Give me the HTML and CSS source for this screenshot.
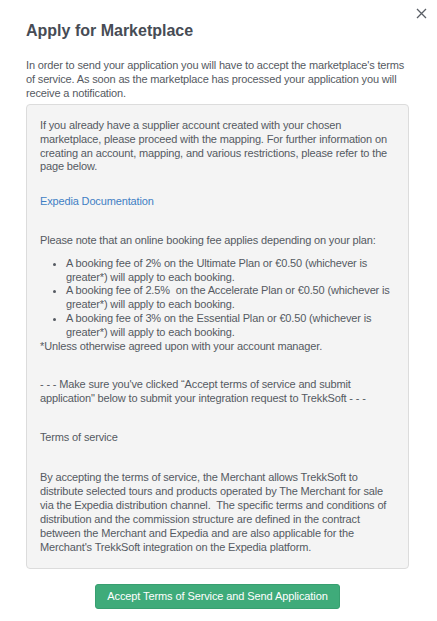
FILE: index.html
```html
<!DOCTYPE html>
<html>
<head>
<meta charset="utf-8">
<link rel="stylesheet" href="styles.css">
</head>
<body>
<div class="modal">
  <button class="close" aria-label="Close">
    <svg width="11" height="11" viewBox="0 0 11 11"><path d="M1 1L10 10M10 1L1 10" stroke="#5a5f66" stroke-width="1.3" fill="none"/></svg>
  </button>
  <h1 class="title">Apply for Marketplace</h1>
  <p class="intro">In order to send your application you will have to accept the marketplace's terms of service. As soon as the marketplace has processed your application you will receive a notification.</p>
  <div class="terms">
    <p class="p-first">If you already have a supplier account created with your chosen marketplace, please proceed with the mapping. For further information on creating an account, mapping, and various restrictions, please refer to the page below.</p>
    <p class="p-link"><a class="link" href="#">Expedia Documentation</a></p>
    <p class="p-gap">Please note that an online booking fee applies depending on your plan:</p>
    <ul class="fees">
      <li>A booking fee of 2% on the Ultimate Plan or €0.50 (whichever is greater*) will apply to each booking.</li>
      <li>A booking fee of 2.5%&nbsp; on the Accelerate Plan or €0.50 (whichever is greater*) will apply to each booking.</li>
      <li>A booking fee of 3% on the Essential Plan or €0.50 (whichever is greater*) will apply to each booking.</li>
    </ul>
    <p class="p-note">*Unless otherwise agreed upon with your account manager.</p>
    <p class="p-gap">- - - Make sure you've clicked “Accept terms of service and submit application" below to submit your integration request to TrekkSoft - - -</p>
    <p class="p-gap">Terms of service</p>
    <p class="p-gap p-last">By accepting the terms of service, the Merchant allows TrekkSoft to distribute selected tours and products operated by The Merchant for sale via the Expedia distribution channel.&nbsp; The specific terms and conditions of distribution and the commission structure are defined in the contract between the Merchant and Expedia and are also applicable for the Merchant's TrekkSoft integration on the Expedia platform.</p>
  </div>
  <div class="actions">
    <button class="accept">Accept Terms of Service and Send Application</button>
  </div>
</div>
</body>
</html>
```
FILE: styles.css
```css
html, body {
  margin: 0;
  padding: 0;
  background: #ffffff;
}
body {
  font-family: "Liberation Sans", Arial, sans-serif;
  font-size: 11px;
  letter-spacing: -0.15px;
  color: #555a62;
}
.modal {
  position: relative;
  padding: 21px 28px 0 26px;
}
.close {
  position: absolute;
  top: 8px;
  right: 10px;
  border: 0;
  background: none;
  padding: 0;
  width: 11px;
  height: 11px;
  cursor: pointer;
}
.close svg { display: block; }
.title {
  margin: 0;
  font-size: 16px;
  font-weight: bold;
  letter-spacing: 0;
  color: #474c55;
  line-height: 20px;
}
.intro {
  margin: 17px 0 0 0;
  line-height: 14px;
}
.terms {
  margin-top: 4px;
  background: #f4f4f4;
  border: 1px solid #dcdcdc;
  border-radius: 4px;
  padding: 14px 13px 14px 13px;
  line-height: 13.8px;
}
.terms p { margin: 0; }
.terms .p-link { margin-top: 21px; }
.terms .p-gap { margin-top: 25px; }
.terms .p-note { margin-top: 0; }
.terms .p-last { line-height: 14px; }
.link {
  color: #3f7fc4;
  text-decoration: none;
}
.fees {
  margin: 9px 0 0 0;
  padding-left: 26px;
}
.actions {
  display: flex;
  justify-content: center;
  margin-top: 15px;
}
.accept {
  background: #3fab7a;
  border: 1px solid #389f70;
  border-radius: 3px;
  color: #ffffff;
  font-family: "Liberation Sans", Arial, sans-serif;
  font-size: 11px;
  letter-spacing: -0.1px;
  width: 245px;
  height: 25px;
  padding: 0;
}
```
